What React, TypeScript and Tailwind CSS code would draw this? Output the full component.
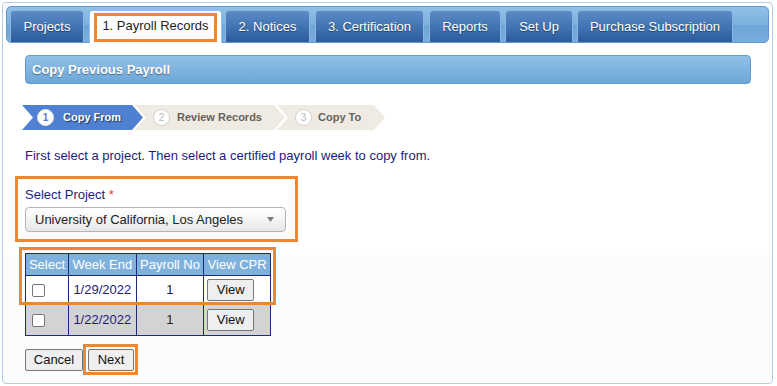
import React from "react";

const tabs: { t: string; w: string; ml: string }[] = [
  { t: "Projects", w: "w-[74px]", ml: "ml-0" },
  { t: "1. Payroll Records", w: "w-[133px]", ml: "ml-[5px]" },
  { t: "2. Notices", w: "w-[85px]", ml: "ml-[3px]" },
  { t: "3. Certification", w: "w-[109px]", ml: "ml-[5px]" },
  { t: "Reports", w: "w-[72px]", ml: "ml-[5px]" },
  { t: "Set Up", w: "w-[68px]", ml: "ml-[4px]" },
  { t: "Purchase Subscription", w: "w-[156px]", ml: "ml-[4px]" },
];

function Circle({ n, active }: { n: number; active?: boolean }) {
  return (
    <span
      className={
        active
          ? "w-[17px] h-[17px] rounded-full bg-white border border-[#dfe7f5] flex items-center justify-center text-[10px] font-bold text-[#4f80d2] leading-none"
          : "w-[17px] h-[17px] rounded-full bg-white border border-[#cfcfcf] flex items-center justify-center text-[10px] text-[#b8b8b8] leading-none"
      }
    >
      {n}
    </span>
  );
}

export default function App() {
  return (
    <div className="w-[777px] h-[386px] bg-white pt-[2px] pl-[2px] font-['Liberation_Sans',Arial,sans-serif]">
      <div className="w-[771px] h-[382px] border border-[#b3cfe8] rounded-[4px] p-[3px] bg-[linear-gradient(#ffffff_0,#ffffff_252px,#fbfcfc_252px)]">
        {/* tab bar */}
        <div className="h-[37px] border border-[#5f9ad2] rounded-[5px] bg-[linear-gradient(#8fc0e7,#7db2de_50%,#6fa6d8_52%,#78addc)] flex items-end pl-[3px]">
          {tabs.map((tab, i) =>
            i === 1 ? (
              <div
                key={tab.t}
                className={
                  tab.w +
                  " " +
                  tab.ml +
                  " relative h-[33px] -mb-px bg-white border border-b-0 border-[#9dc0e4] rounded-t-[4px] flex items-center justify-center text-[13px] text-[#1e1e1e] pb-[2px] whitespace-nowrap"
                }
              >
                {tab.t}
                <div className="absolute left-[4px] right-[4px] top-[2px] bottom-[1px] border-[3px] border-[#f0872c]" />
              </div>
            ) : (
              <div
                key={tab.t}
                className={
                  tab.w +
                  " " +
                  tab.ml +
                  " h-[32px] border border-b-0 border-[#8fb5df] rounded-t-[4px] bg-[linear-gradient(#5c8bc7,#4274b3_50%,#2e5c9c)] flex items-center justify-center text-[13px] text-white whitespace-nowrap [text-shadow:0_1px_1px_rgba(0,0,0,0.45)]"
                }
              >
                {tab.t}
              </div>
            )
          )}
        </div>

        <div className="pl-[19px] pr-[18px]">
          {/* header */}
          <div className="mt-[12px] h-[29px] border border-[#5c9bd5] rounded-[4px] bg-[linear-gradient(#93c1e6,#7fb3df_50%,#6ca6d8)] flex items-center pl-[6px] text-[13px] font-bold text-white [text-shadow:0_1px_1px_rgba(0,0,0,0.4)]">
            Copy Previous Payroll
          </div>

          {/* steps */}
          <div className="mt-[21px] flex h-[25px] -ml-[3px]">
            <div className="w-[121px] h-[25px] bg-[#4f80d2] pl-[15px] flex items-center [clip-path:polygon(0_0,calc(100%-11px)_0,100%_50%,calc(100%-11px)_100%,0_100%,11px_50%)]">
              <Circle n={1} active />
              <span className="ml-[9px] text-[11px] font-bold text-white [text-shadow:1px_1px_1px_rgba(0,0,0,0.6)]">
                Copy From
              </span>
            </div>
            <div className="-ml-[8px] w-[150px] h-[25px] bg-[#efebe2] pl-[18px] flex items-center [clip-path:polygon(0_0,calc(100%-11px)_0,100%_50%,calc(100%-11px)_100%,0_100%,11px_50%)]">
              <Circle n={2} />
              <span className="ml-[7px] text-[11px] font-bold text-[#67625b]">
                Review Records
              </span>
            </div>
            <div className="-ml-[8px] w-[108px] h-[25px] bg-[#efebe2] pl-[18px] flex items-center [clip-path:polygon(0_0,calc(100%-11px)_0,100%_50%,calc(100%-11px)_100%,0_100%,11px_50%)]">
              <Circle n={3} />
              <span className="ml-[6px] text-[11px] font-bold text-[#67625b]">
                Copy To
              </span>
            </div>
          </div>

          {/* instruction */}
          <div className="mt-[18px] text-[13px] leading-[15px] text-[#1c1c80]">
            First select a project. Then select a certified payroll week to copy from.
          </div>

          {/* select project */}
          <div className="mt-[13px] -ml-[10px] w-[283px] h-[66px] border-[3px] border-[#f0872c] pl-[7px] pt-[8px]">
            <div className="text-[13px] leading-[15px] text-[#1c1c80]">
              Select Project <span className="text-[#e23b3b]">*</span>
            </div>
            <div className="mt-[5px] w-[261px] h-[25px] border border-[#b4b4b4] rounded-[4px] bg-[linear-gradient(#ffffff,#f4f4f4_50%,#e6e6e6)] flex items-center pl-[9px] pr-[11px] justify-between text-[13px] text-[#222]">
              <span>University of California, Los Angeles</span>
              <svg width="7" height="5" viewBox="0 0 7 5">
                <path d="M0 0 L7 0 L3.5 5 Z" fill="#7a7a7a" />
              </svg>
            </div>
          </div>

          {/* table */}
          <div className="relative mt-[11px] w-[246px]">
            <table className="border-collapse text-[13px] w-[246px]">
              <colgroup>
                <col className="w-[43px]" />
                <col className="w-[68px]" />
                <col className="w-[68px]" />
                <col className="w-[67px]" />
              </colgroup>
              <thead>
                <tr className="h-[22px] bg-[#7fb1dd] text-white">
                  <th className="border border-[#1d2a80] font-normal px-0">Select</th>
                  <th className="border border-[#1d2a80] font-normal px-0">Week End</th>
                  <th className="border border-[#1d2a80] font-normal px-0">Payroll No</th>
                  <th className="border border-[#1d2a80] font-normal px-0">View CPR</th>
                </tr>
              </thead>
              <tbody>
                {[
                  { d: "1/29/2022", bg: "bg-white", h: "h-[29px]" },
                  { d: "1/22/2022", bg: "bg-[#d3d3d3]", h: "h-[31px]" },
                ].map((r) => (
                  <tr key={r.d} className={r.bg + " " + r.h}>
                    <td className="border border-[#1d2a80] pl-[6px]">
                      <span className="block w-[13px] h-[13px] border border-[#767676] rounded-[2px] bg-white" />
                    </td>
                    <td className="border border-[#1d2a80] text-center text-[#1c1c80]">{r.d}</td>
                    <td className="border border-[#1d2a80] text-center text-[#222]">1</td>
                    <td className="border border-[#1d2a80] pl-[3px]">
                      <div className="w-[47px] h-[22px] border border-[#767676] rounded-[2px] bg-[#efefef] flex items-center justify-center text-[#111]">
                        View
                      </div>
                    </td>
                  </tr>
                ))}
              </tbody>
            </table>
            <div className="absolute left-[-6px] top-[-6px] w-[257px] h-[58px] border-[3px] border-[#f0872c]" />
          </div>

          {/* buttons */}
          <div className="mt-[13px] flex gap-[5px]">
            <div className="w-[58px] h-[22px] border border-[#767676] rounded-[2px] bg-[#efefef] flex items-center justify-center text-[13px] text-[#111]">
              Cancel
            </div>
            <div className="relative w-[46px] h-[22px] border border-[#767676] rounded-[2px] bg-[#efefef] flex items-center justify-center text-[13px] text-[#111]">
              Next
              <div className="absolute left-[-6px] top-[-6px] right-[-5px] bottom-[-5px] border-[3px] border-[#f0872c]" />
            </div>
          </div>
        </div>
      </div>
    </div>
  );
}
